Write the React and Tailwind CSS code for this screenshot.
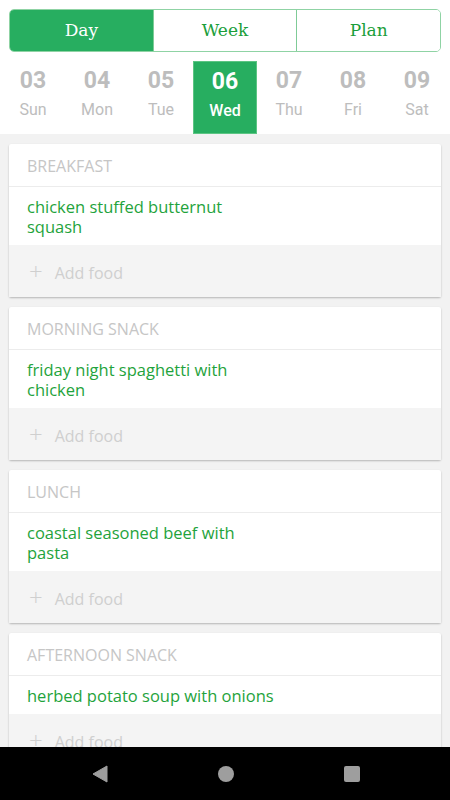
import { useState } from "react";

const days = [
  ["03", "Sun"],
  ["04", "Mon"],
  ["05", "Tue"],
  ["06", "Wed"],
  ["07", "Thu"],
  ["08", "Fri"],
  ["09", "Sat"],
];

const meals = [
  ["Breakfast", "chicken stuffed butternut squash"],
  ["Morning snack", "friday night spaghetti with chicken"],
  ["Lunch", "coastal seasoned beef with pasta"],
  ["Afternoon snack", "herbed potato soup with onions"],
];

function MealCard({ title, food }) {
  return (
    <div className="bg-white rounded-[2px] shadow-[0_1px_2px_rgba(0,0,0,0.25)] shrink-0">
      <div className="h-[43px] flex items-center pt-[2px] px-[18px] border-b border-[#ececec] text-[16px] text-[#c6c6c6] uppercase">
        {title}
      </div>
      <div className="pt-[10px] pb-[8px] px-[18px]">
        <p className="w-[250px] text-[16.5px] leading-[20px] text-[#1fa33c]">{food}</p>
      </div>
      <div className="h-[52px] bg-[#f4f4f4] flex items-center pt-[3px] px-[20px] gap-[12px] text-[#cfcfcf]">
        <span className="text-[24px] font-light leading-none -mt-[3px]">+</span>
        <span className="text-[16px]">Add food</span>
      </div>
    </div>
  );
}

export default function App() {
  const [tab, setTab] = useState("Day");
  const [day, setDay] = useState("06");

  return (
    <div className="w-[450px] h-[800px] flex flex-col bg-[#f2f2f2] overflow-hidden" style={{ fontFamily: "'Open Sans', 'Noto Sans', sans-serif" }}>
      <div className="bg-white shrink-0">
        <div className="px-[9px] pt-[9px]">
          <div className="flex h-[43px] border border-[#8fd3a4] rounded-[5px] overflow-hidden" style={{ fontFamily: "'DejaVu Serif', serif" }}>
            {["Day", "Week", "Plan"].map((t, i) => (
              <button
                key={t}
                onClick={() => setTab(t)}
                className={
                  "flex-1 text-[17px] " +
                  (i > 0 ? "border-l border-[#7fcb97] " : "") +
                  (tab === t ? "bg-[#27ae60] text-white" : "bg-white text-[#1a9e3a]")
                }
              >
                {t}
              </button>
            ))}
          </div>
        </div>
        <div className="grid grid-cols-7 mt-[9px] h-[73px] px-[1px]" style={{ fontFamily: "Roboto, sans-serif" }}>
          {days.map(([n, d]) => (
            <button
              key={n}
              onClick={() => setDay(n)}
              className={
                "flex flex-col items-center pt-[5px] " +
                (day === n ? "bg-[#27ae60] border border-[#5cc583] text-white" : "text-[#bdbdbd]")
              }
            >
              <span className="text-[23px] font-bold leading-[30px]">{n}</span>
              <span className={"text-[16px] leading-[27px] " + (day === n ? "font-medium" : "")}>{d}</span>
            </button>
          ))}
        </div>
      </div>
      <div className="flex-1 min-h-0 overflow-hidden flex flex-col gap-[10px] px-[9px] pt-[10px]">
        {meals.map(([t, f]) => (
          <MealCard key={t} title={t} food={f} />
        ))}
      </div>
      <div className="h-[53px] bg-black shrink-0 flex items-center justify-center gap-[110px] pl-[2px]">
        <svg width="16" height="18" viewBox="0 0 16 18">
          <path d="M15 1 L15 17 L1 9 Z" fill="#9e9e9e" stroke="#9e9e9e" strokeWidth="1" strokeLinejoin="round" />
        </svg>
        <svg width="16" height="16" viewBox="0 0 16 16">
          <circle cx="8" cy="8" r="8" fill="#9e9e9e" />
        </svg>
        <svg width="16" height="16" viewBox="0 0 16 16">
          <rect x="0" y="0" width="16" height="16" rx="2" fill="#9e9e9e" />
        </svg>
      </div>
    </div>
  );
}
